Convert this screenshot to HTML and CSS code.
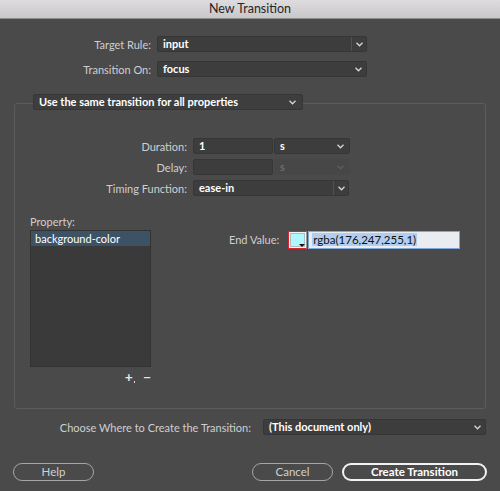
FILE: index.html
```html
<!DOCTYPE html>
<html>
<head>
<meta charset="utf-8">
<link rel="stylesheet" href="styles.css">
</head>
<body>
<div class="dialog">
  <div class="titlebar">New Transition</div>

  <div class="top">
    <div class="row">
      <span class="label">Target Rule:</span>
      <div class="box wide split">
        <span class="val">input</span>
        <span class="seg"><svg class="chev" viewBox="0 0 7 5"><polyline points="0.5,0.8 3.5,3.8 6.5,0.8"/></svg></span>
      </div>
    </div>
    <div class="row">
      <span class="label">Transition On:</span>
      <div class="box wide">
        <span class="val">focus</span>
        <span class="seg noline"><svg class="chev" viewBox="0 0 7 5"><polyline points="0.5,0.8 3.5,3.8 6.5,0.8"/></svg></span>
      </div>
    </div>
  </div>

  <div class="group">
    <div class="legend box">
      <span class="val">Use the same transition for all properties</span>
      <span class="seg noline"><svg class="chev" viewBox="0 0 7 5"><polyline points="0.5,0.8 3.5,3.8 6.5,0.8"/></svg></span>
    </div>

    <div class="timing">
      <div class="row">
        <span class="label ilabel">Duration:</span>
        <div class="box num"><span class="val">1</span></div>
        <div class="box unit">
          <span class="val">s</span>
          <span class="seg noline"><svg class="chev" viewBox="0 0 7 5"><polyline points="0.5,0.8 3.5,3.8 6.5,0.8"/></svg></span>
        </div>
      </div>
      <div class="row">
        <span class="label ilabel">Delay:</span>
        <div class="box num"></div>
        <div class="box unit disabled">
          <span class="val">s</span>
          <span class="seg noline"><svg class="chev" viewBox="0 0 7 5"><polyline points="0.5,0.8 3.5,3.8 6.5,0.8"/></svg></span>
        </div>
      </div>
      <div class="row">
        <span class="label ilabel">Timing Function:</span>
        <div class="box func split">
          <span class="val">ease-in</span>
          <span class="seg"><svg class="chev" viewBox="0 0 7 5"><polyline points="0.5,0.8 3.5,3.8 6.5,0.8"/></svg></span>
        </div>
      </div>
    </div>

    <div class="lower">
      <div class="propcol">
        <div class="plabel">Property:</div>
        <div class="list">
          <div class="item sel">background-color</div>
        </div>
        <div class="pm"><span class="plus">+<span class="dot"></span></span><span class="minus">&minus;</span></div>
      </div>
      <div class="endrow">
        <span class="elabel">End Value:</span>
        <div class="swatch"><div class="swfill"></div><span class="tri"></span></div>
        <div class="textin"><span class="seltext">rgba(176,247,255,1)</span></div>
      </div>
    </div>
  </div>

  <div class="where">
    <span class="label">Choose Where to Create the Transition:</span>
    <div class="box wherebox">
      <span class="val">(This document only)</span>
      <span class="seg noline"><svg class="chev" viewBox="0 0 7 5"><polyline points="0.5,0.8 3.5,3.8 6.5,0.8"/></svg></span>
    </div>
  </div>

  <div class="buttons">
    <button class="btn help">Help</button>
    <div class="spacer"></div>
    <button class="btn cancel">Cancel</button>
    <button class="btn primary">Create Transition</button>
  </div>
</div>
</body>
</html>
```

FILE: styles.css
```css
* { box-sizing: border-box; }
html, body { margin: 0; padding: 0; }
body {
  width: 500px;
  height: 491px;
  background: #4a4a4a;
  font-family: "Lato", "Open Sans", sans-serif;
  font-size: 11px;
  color: #d0d0d0;
  overflow: hidden;
}
.dialog { width: 500px; height: 491px; display: flex; flex-direction: column; }

.titlebar {
  height: 19px;
  background: linear-gradient(#dedcde, #c9c7c9);
  border-bottom: 1px solid #8e8c8e;
  color: #262626;
  text-align: center;
  font-size: 12.5px;
  line-height: 18px;
}

.top { padding-top: 17px; display: flex; flex-direction: column; gap: 9px; }
.row { display: flex; align-items: center; }
.label { color: #cfcfcf; text-align: right; white-space: nowrap; font-size: 11px; }
.top .label { width: 151px; margin-right: 6px; }

.box {
  height: 16px;
  background: #3d3d3d;
  border: 1px solid #363636;
  border-radius: 2px;
  display: flex;
  align-items: center;
  color: #ffffff;
  font-weight: 700;
}
.val { flex: 1; padding-left: 5px; white-space: nowrap; line-height: 14px; font-size: 11px; }
.seg {
  width: 15px;
  height: 100%;
  display: flex;
  align-items: center;
  justify-content: center;
  border-left: 1px solid #525252;
}
.seg.noline { border-left: none; }
.chev { width: 7px; height: 5px; fill: none; stroke: #d6d6d6; stroke-width: 1.3; }
.wide { width: 210px; }

.group {
  margin: 26px 14px 0 14px;
  height: 306px;
  border: 1px solid #5c5c5c;
  border-radius: 3px;
  display: flex;
  flex-direction: column;
}
.legend {
  width: 270px;
  margin-top: -10px;
  margin-left: 18px;
  height: 16px;
  background: #3e3e3e;
}
.legend .seg { width: 20px; }

.timing { margin-top: 28px; display: flex; flex-direction: column; gap: 5px; }
.ilabel { width: 172px; margin-right: 6px; }
.num { width: 80px; margin-right: 1px; }
.unit { width: 76px; }
.unit .seg { width: 18px; }
.func { width: 156px; }
.disabled { color: #6c6c6c; background: #474747; border-color: #474747; }
.disabled .chev { stroke: #5e5e5e; }

.lower { display: flex; margin-top: 19px; }
.propcol { width: 137px; padding-left: 15px; display: flex; flex-direction: column; }
.plabel { font-size: 11px; color: #cfcfcf; height: 14px; line-height: 14px; }
.list {
  margin-top: 1px;
  width: 121px;
  height: 137px;
  background: #3a3a3a;
  border: 1px solid #333;
}
.item { height: 15px; line-height: 15px; padding-left: 4px; color: #fff; font-size: 11px; }
.item.sel { background: #3e5266; }
.pm { display: flex; justify-content: flex-end; gap: 8px; width: 121px; margin-top: 3px; color: #e6e6e6; font-size: 14px; font-weight: 700; line-height: 14px; }
.plus { position: relative; padding-right: 2px; }
.dot { position: absolute; right: 0; bottom: 1px; width: 1px; height: 2px; background: #ddd; }

.endrow { display: flex; align-items: center; margin-top: 16px; height: 17px; margin-left: 77px; }
.elabel { color: #cfcfcf; margin-right: 9px; }
.swatch {
  position: relative;
  width: 19px;
  height: 18px;
  border: 1px solid #e0232b;
  border-right-color: #9a9a9a;
  background: #f3f3f3;
  padding: 1px;
}
.swfill { width: 100%; height: 100%; background: #b0f7ff; border: 1px solid #a8c0c4; }
.tri {
  position: absolute;
  right: 1px;
  bottom: 1px;
  width: 0; height: 0;
  border-left: 3px solid transparent;
  border-right: 3px solid transparent;
  border-top: 3px solid #111;
}
.textin {
  margin-left: 1px;
  width: 152px;
  height: 18px;
  background: #e9edf2;
  border: 1px solid #7fa8d6;
  display: flex;
  align-items: center;
  padding-left: 3px;
}
.seltext { background: #b2cdee; color: #111; font-weight: 400; font-size: 11.5px; line-height: 13px; padding: 0 1px; }

.where { display: flex; align-items: center; margin-top: 10px; }
.where .label { width: 251px; margin-right: 12px; }
.wherebox { width: 223px; }

.buttons { display: flex; align-items: center; margin-top: 28px; padding: 0 13px; }
.spacer { flex: 1; }
.btn {
  height: 18px;
  border-radius: 9px;
  background: #4a4a4a;
  border: 1px solid #a6a6a6;
  color: #d0d0d0;
  font-family: "Lato", "Open Sans", sans-serif;
  font-size: 11.5px;
  padding: 0;
  line-height: 14px;
}
.help { width: 81px; }
.cancel { width: 81px; margin-right: 9px; }
.primary { width: 145px; border: 2px solid #f2f2f2; color: #fff; font-weight: 700; }
```
